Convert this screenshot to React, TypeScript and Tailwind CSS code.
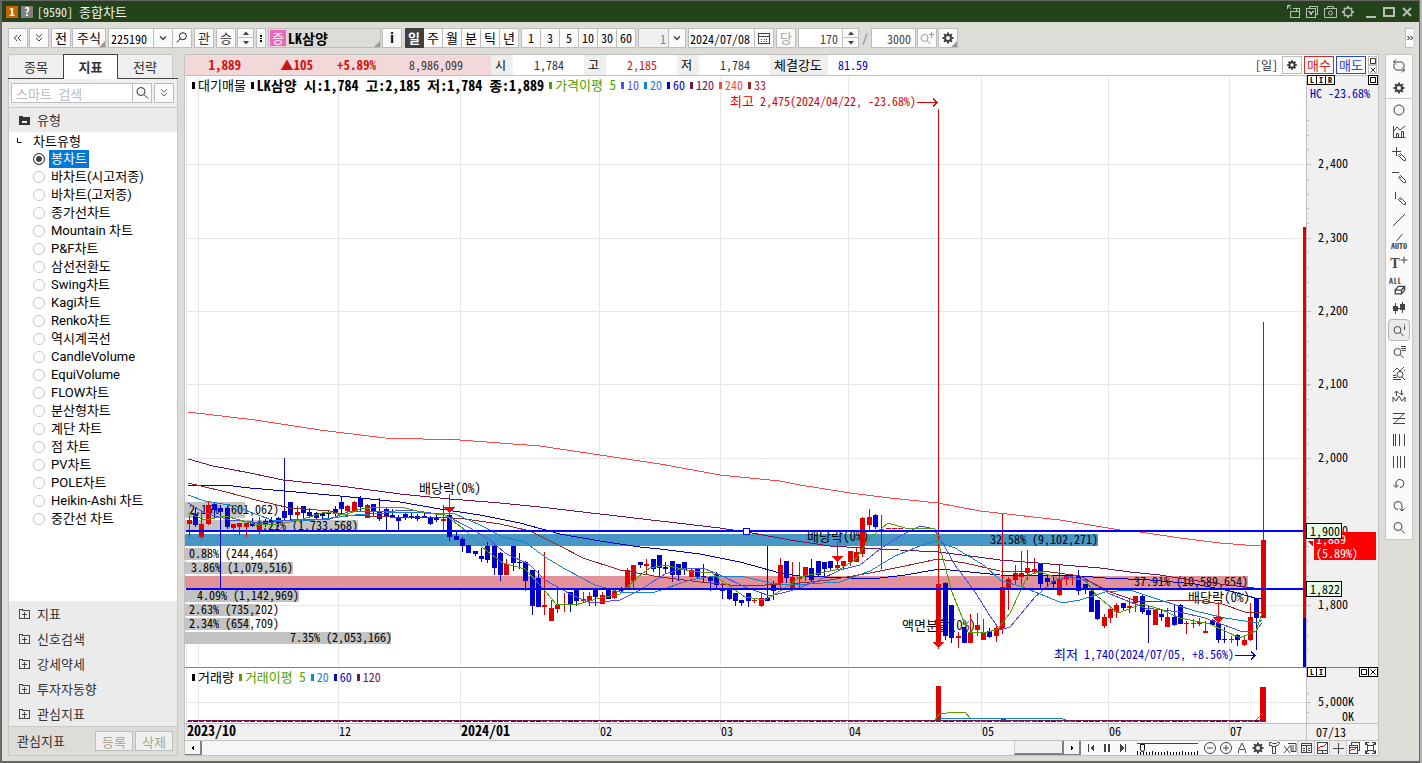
import React, { useState } from 'react';

const MONO =
  'font-["Noto_Sans_Mono_CJK_KR","Noto_Sans_CJK_KR",monospace]';

const RED = '#e00000';
const BLUE = '#0000c8';

// [high, bodyTop, bodyBottom, low, rising]
const CANDLES: number[][] = [
  [515, 520, 524, 537, 1], [508, 514, 525, 527, 0], [511, 524, 537, 539, 1],
  [502, 505, 524, 525, 1], [503, 504, 510, 518, 0], [505, 508, 512, 588, 0],
  [506, 508, 527, 529, 0], [524, 524, 528, 530, 1], [523, 523, 527, 535, 1],
  [523, 523, 527, 537, 1], [518, 523, 526, 527, 0], [517, 522, 530, 534, 1],
  [519, 521, 524, 527, 0], [517, 520, 523, 527, 0], [517, 518, 523, 527, 0],
  [458, 511, 518, 520, 0], [502, 502, 515, 520, 0], [506, 512, 515, 520, 1],
  [506, 506, 513, 518, 0], [508, 512, 516, 518, 0], [512, 513, 518, 520, 0],
  [513, 513, 516, 520, 0], [511, 513, 514, 518, 0], [506, 509, 513, 517, 0],
  [496, 502, 509, 514, 0], [505, 506, 511, 517, 1], [501, 502, 511, 512, 1],
  [496, 498, 507, 512, 0], [504, 505, 518, 518, 1], [504, 504, 512, 517, 0],
  [498, 512, 519, 521, 0], [508, 509, 516, 530, 0], [509, 515, 517, 518, 0],
  [515, 517, 521, 530, 0], [512, 514, 517, 520, 0], [512, 516, 517, 519, 0],
  [514, 516, 519, 521, 0], [513, 516, 517, 518, 0], [516, 517, 524, 525, 0],
  [514, 517, 520, 522, 0], [505, 519, 521, 530, 1], [514, 515, 537, 541, 0],
  [530, 536, 540, 540, 0], [537, 539, 546, 552, 0], [545, 545, 553, 553, 0],
  [551, 551, 554, 556, 0], [548, 556, 559, 562, 0], [542, 546, 560, 563, 0],
  [545, 546, 568, 575, 0], [552, 553, 575, 581, 0], [559, 564, 575, 575, 1],
  [546, 546, 563, 571, 0], [553, 562, 563, 569, 0], [561, 562, 581, 591, 0],
  [570, 570, 606, 615, 0], [570, 578, 607, 607, 0], [552, 605, 607, 615, 1],
  [600, 608, 621, 621, 1], [590, 605, 609, 613, 1], [593, 604, 605, 612, 1],
  [592, 592, 604, 612, 0], [589, 590, 601, 606, 0], [592, 599, 601, 602, 1],
  [592, 596, 601, 606, 1], [589, 590, 597, 606, 0], [592, 595, 604, 604, 1],
  [589, 589, 599, 599, 0], [590, 591, 598, 599, 1], [587, 588, 591, 592, 0],
  [568, 570, 588, 590, 1], [565, 565, 581, 588, 1], [562, 562, 565, 568, 0],
  [559, 564, 566, 574, 1], [559, 559, 569, 572, 0], [555, 555, 568, 577, 0],
  [562, 567, 569, 574, 0], [561, 561, 575, 582, 0], [564, 564, 575, 581, 0],
  [562, 562, 570, 575, 0], [568, 570, 577, 577, 1], [568, 569, 577, 579, 0],
  [564, 576, 577, 582, 0], [576, 577, 581, 591, 0], [572, 574, 585, 589, 0],
  [583, 589, 591, 599, 0], [589, 590, 599, 600, 0], [593, 593, 601, 606, 0],
  [600, 600, 603, 606, 0], [593, 593, 601, 607, 0], [598, 600, 601, 603, 1],
  [593, 598, 606, 607, 1], [546, 598, 601, 601, 0], [581, 585, 591, 600, 0],
  [558, 565, 583, 588, 1], [561, 561, 578, 583, 0], [562, 577, 588, 590, 1],
  [562, 577, 579, 588, 1], [567, 567, 576, 581, 1], [559, 568, 580, 581, 0],
  [561, 561, 575, 577, 0], [562, 562, 569, 576, 0], [561, 561, 568, 570, 0],
  [562, 565, 568, 569, 1], [561, 561, 566, 569, 1], [551, 551, 562, 566, 1],
  [548, 552, 562, 562, 1], [517, 518, 554, 557, 1], [509, 517, 525, 530, 1],
  [514, 515, 527, 529, 0], [515, 529, 530, 569, 1], [528, 528, 529, 529, 1],
  [528, 528, 529, 529, 1], [528, 528, 529, 529, 1], [528, 528, 529, 529, 1],
  [528, 528, 529, 529, 1], [528, 528, 529, 529, 1], [528, 528, 529, 529, 1],
  [528, 528, 529, 529, 1], [109, 584, 643, 649, 1], [582, 583, 636, 640, 0],
  [605, 605, 638, 643, 0], [632, 636, 638, 648, 1], [627, 627, 643, 643, 0],
  [614, 632, 643, 643, 1], [613, 625, 630, 636, 1], [619, 633, 640, 640, 1],
  [628, 631, 637, 638, 0], [626, 628, 636, 642, 1], [513, 587, 629, 634, 1],
  [577, 579, 588, 610, 1], [565, 573, 580, 585, 1], [551, 573, 577, 585, 1],
  [550, 568, 573, 580, 1], [558, 569, 572, 574, 1], [563, 564, 584, 588, 0],
  [576, 578, 582, 586, 0], [577, 581, 584, 588, 0], [565, 578, 595, 596, 1],
  [575, 576, 579, 585, 1], [575, 577, 578, 585, 1], [570, 576, 591, 595, 0],
  [584, 584, 589, 594, 0], [590, 591, 612, 612, 0], [600, 600, 619, 620, 0],
  [614, 617, 626, 628, 1], [608, 609, 618, 623, 1], [603, 605, 612, 618, 1],
  [603, 603, 608, 610, 0], [599, 606, 608, 613, 1], [596, 596, 603, 612, 1],
  [595, 596, 612, 614, 0], [605, 610, 615, 643, 0], [609, 610, 625, 625, 1],
  [610, 614, 617, 621, 0], [608, 617, 627, 627, 1], [605, 617, 625, 626, 0],
  [604, 605, 624, 624, 0], [621, 623, 624, 634, 1], [619, 623, 624, 628, 1],
  [618, 622, 624, 626, 1], [621, 631, 633, 633, 1], [619, 620, 625, 625, 0],
  [620, 623, 640, 643, 0], [627, 639, 640, 643, 0], [636, 639, 640, 643, 1],
  [634, 635, 640, 646, 0], [636, 640, 645, 646, 1], [603, 617, 640, 641, 1],
  [598, 598, 618, 650, 0], [322, 540, 618, 618, 1],
];

const barX = (i: number) => Math.floor(189.1 + i * 6.355);

const AVERAGES = [
  {
    key: '240',
    color: '#ff4646',
    points:
      '188,412 255,420 320,430 385,438 460,440 540,446 600,455 660,464 720,475 780,481 800,485 850,493 890,498 938,503 980,511 1060,520 1120,530 1140,532 1180,538 1220,543 1245,545 1262,546',
  },
  {
    key: '120',
    color: '#781450',
    points:
      '188,459 213,466 250,473 283,480 340,486 400,494 450,499 500,503 540,507 600,514 660,521 720,528 752,533 790,540 830,546 880,549 938,552 970,556 1000,560 1050,564 1100,568 1130,572 1160,575 1190,580 1220,584 1262,589',
  },
  {
    key: '60',
    color: '#0000c8',
    points:
      '188,485 224,485 250,488 285,491 340,496 400,502 440,509 480,515 520,523 560,534 600,541 640,547 660,549 700,554 740,562 780,573 800,576 850,578 880,578 905,575 940,569 960,571 1000,575 1080,576 1105,578 1150,580 1195,584 1230,591 1255,598 1262,598',
  },
  {
    key: '33',
    color: '#962828',
    points:
      '188,483 222,491 260,501 290,508 330,511 345,515 390,517 440,517 465,519 500,524 530,531 560,546 583,558 620,570 660,577 700,582 740,586 790,584 830,580 870,573 900,567 938,559 965,563 1000,571 1050,572 1080,576 1110,592 1140,602 1195,600 1222,604 1245,612 1262,613',
  },
  {
    key: '20',
    color: '#1482d2',
    points:
      '188,495 205,501 235,506 255,514 275,521 315,520 355,515 400,512 455,514 480,525 503,537 525,542 545,557 565,569 595,585 620,592 655,592 690,580 715,576 745,577 770,583 790,585 840,582 870,571 895,556 920,546 936,541 955,548 985,566 1000,580 1025,588 1050,598 1062,603 1080,600 1105,592 1130,590 1160,600 1195,611 1225,618 1258,623 1262,620',
  },
  {
    key: '10',
    color: '#5050f0',
    points:
      '188,503 205,513 230,520 265,523 300,519 330,519 350,511 380,512 410,510 445,515 470,528 490,540 505,553 530,565 545,580 570,594 590,603 620,600 640,590 665,574 685,568 705,569 720,575 745,587 770,596 790,591 815,582 840,570 860,565 880,549 900,536 920,526 935,529 955,565 975,592 990,616 1000,630 1010,627 1035,597 1055,580 1070,576 1090,582 1110,594 1145,608 1180,612 1205,618 1240,631 1256,631 1262,623',
  },
  {
    key: '5',
    color: '#50a000',
    points:
      '188,513 205,520 225,516 240,520 258,525 280,524 300,520 325,512 345,515 360,509 380,507 405,508 425,513 445,515 465,530 483,548 503,563 525,569 540,585 556,604 575,605 600,598 620,594 638,577 650,568 665,565 690,571 712,573 725,583 745,597 765,600 785,588 800,577 825,572 840,569 855,560 870,538 888,523 905,528 935,529 940,548 952,592 968,632 985,633 998,629 1010,613 1028,575 1040,572 1060,579 1085,580 1097,596 1118,613 1142,604 1160,609 1180,618 1210,624 1240,638 1256,631 1262,613',
  },
];

const PROFILE = [
  { y: 502, h: 16, end: 245, x: 189, fill: '#c3c3c3', text: '2.15% (601,062)' },
  { y: 520, h: 12, end: 358, x: 256, fill: '#c3c3c3', text: '6.21% (1,733,568)' },
  { y: 534, h: 12, end: 1098, x: 990, fill: '#4696c6', text: '32.58% (9,102,271)' },
  { y: 548, h: 12, end: 209, x: 189, fill: '#c3c3c3', text: '0.88% (244,464)' },
  { y: 562, h: 12, end: 293, x: 191, fill: '#c3c3c3', text: '3.86% (1,079,516)' },
  { y: 576, h: 12, end: 1248, x: 1134, fill: '#e4929a', text: '37.91% (10,589,654)' },
  { y: 590, h: 12, end: 299, x: 197, fill: '#c3c3c3', text: '4.09% (1,142,969)' },
  { y: 604, h: 12, end: 259, x: 189, fill: '#c3c3c3', text: '2.63% (735,202)' },
  { y: 618, h: 12, end: 250, x: 189, fill: '#c3c3c3', text: '2.34% (654,709)' },
  { y: 632, h: 12, end: 391, x: 290, fill: '#c3c3c3', text: '7.35% (2,053,166)' },
];

const EVENTS = [
  { x: 419, y: 493, text: '배당락(0%)', ax: 449, from: 494, to: 512 },
  { x: 807, y: 541, text: '배당락(0%)', ax: 837, from: 542, to: 561 },
  { x: 902, y: 630, text: '액면분할(0%)', ax: 938, from: 630, to: 647 },
  { x: 1188, y: 602, text: '배당락(0%)', ax: 1218, from: 602, to: 622 },
];

const MONTHS = [
  { x: 186, text: '2023/10', bold: true },
  { x: 338, text: '12' },
  { x: 460, text: '2024/01', bold: true },
  { x: 599, text: '02' },
  { x: 720, text: '03' },
  { x: 848, text: '04' },
  { x: 981, text: '05' },
  { x: 1108, text: '06' },
  { x: 1229, text: '07' },
];

const PRICES = [
  { y: 164, text: '2,400' },
  { y: 238, text: '2,300' },
  { y: 311, text: '2,200' },
  { y: 384, text: '2,100' },
  { y: 458, text: '2,000' },
  { y: 531, text: '1,900' },
  { y: 605, text: '1,800' },
];

const MINOR_TICKS = Array.from({ length: 37 }, (_, i) =>
  Math.round(120 + i * 14.7)
);

const PRICE_LEGEND = [
  { text: '대기매물', color: 'text-black text-[13px]' },
  {
    text: 'LK삼양 시:1,784 고:2,185 저:1,784 종:1,889',
    color: 'text-black text-sm font-bold',
  },
  { text: '가격이평 5', color: 'text-[#50a000] text-[13px]' },
  { text: '10', color: 'text-[#5050f0]' },
  { text: '20', color: 'text-[#1482d2]' },
  { text: '60', color: 'text-[#0000c8]' },
  { text: '120', color: 'text-[#781450]' },
  { text: '240', color: 'text-[#ff4646]' },
  { text: '33', color: 'text-[#962828]' },
];

const VOLUME_LEGEND = [
  { text: '거래량', color: 'text-black text-[13px]' },
  { text: '거래이평 5', color: 'text-[#50a000] text-[13px]' },
  { text: '20', color: 'text-[#1482d2]' },
  { text: '60', color: 'text-[#0000c8]' },
  { text: '120', color: 'text-[#781450]' },
];

const CHART_TYPES = [
  '봉차트', '바차트(시고저종)', '바차트(고저종)', '종가선차트', 'Mountain 차트',
  'P&F차트', '삼선전환도', 'Swing차트', 'Kagi차트', 'Renko차트', '역시계곡선',
  'CandleVolume', 'EquiVolume', 'FLOW차트', '분산형차트', '계단 차트', '점 차트',
  'PV차트', 'POLE차트', 'Heikin-Ashi 차트', '중간선 차트',
];

const GROUPS = ['지표', '신호검색', '강세약세', '투자자동향', '관심지표'];

type IconProps = {
  d?: string;
  fill?: string;
  size?: string;
  width?: number;
  crisp?: boolean;
  children?: React.ReactNode;
};

const Icon = ({ d, fill, size = 'size-4', width = 1, crisp, children }: IconProps) => (
  <svg
    viewBox="0 0 16 16"
    className={`${size} shrink-0`}
    fill="none"
    stroke="currentColor"
    strokeWidth={width}
    shapeRendering={crisp ? 'crispEdges' : 'auto'}
    aria-hidden="true"
  >
    {d && <path d={d} />}
    {fill && <path d={fill} fill="currentColor" stroke="none" />}
    {children}
  </svg>
);

const Gear = ({ size }: { size?: string }) => (
  <Icon size={size}>
    <circle cx="8" cy="8" r="3" strokeWidth="2" />
    <path
      d="M8 2.5v2M8 11.5v2M2.5 8h2M11.5 8h2M4.1 4.1l1.4 1.4M10.5 10.5l1.4 1.4M4.1 11.9l1.4-1.4M10.5 5.5l1.4-1.4"
      strokeWidth="2"
    />
  </Icon>
);

const Magnifier = () => <Icon d="M11 6.5a4 4 0 1 1-8 0a4 4 0 0 1 8 0zM10 9.5l4 4" />;

const PENCIL = 'M7.500 9.500l2-2 5 5v2h-2zM8.500 10.500l2-2';

const SIDE_TOOLS: { name: string; icon: React.ReactNode; active?: boolean }[] = [
  { name: '새로고침', icon: <Icon d="M5 1.5L2.5 4L5 6.5M2.5 4H11l2 2v4M11 14.5l2.5-2.500L11 9.500M13.500 12H5l-2-2V6" /> },
  { name: '설정', icon: <Gear /> },
  { name: '원', icon: <Icon d="M13 8a5 5 0 1 1-10 0a5 5 0 0 1 10 0z" /> },
  { name: '지표 추가', icon: <Icon d="M2.5 2v11.5h12M5.5 13V9.5h2V13M10.5 13V7.5h2V13M3 7l3-4 3 3 5-4" /> },
  { name: '십자선', icon: <Icon d={`M1 5.5h9M5.5 1v9${PENCIL}`} /> },
  { name: '수평선', icon: <Icon d={`M1 4.5h7${PENCIL}`} /> },
  { name: '수직선', icon: <Icon d={`M4.5 2v7${PENCIL}`} /> },
  { name: '추세선', icon: <Icon d="M2 14L14 2" /> },
  { name: '자동추세선', icon: null },
  { name: '문자', icon: null },
  { name: '모두 지우기', icon: null },
  { name: '봉', icon: <Icon d="M4.5 3v11M11.5 2v11" fill="M2 6h5v5H2zM9 4h5v6H9zM6 8h4v1H6z" /> },
  { name: '정보', active: true, icon: <Icon d="M10 8a3.5 3.5 0 1 1-7 0a3.5 3.5 0 0 1 7 0zM9 10.5l3.5 3.5M13.5 4v4M13.5 2v1" /> },
  { name: '목록', icon: <Icon d="M10 8a3.5 3.5 0 1 1-7 0a3.5 3.5 0 0 1 7 0zM9 10.5l3.5 3.5M10 2.5h5M10 4.5h5M11 6.5h4" /> },
  { name: '패턴 검색', icon: <Icon d="M2 6l4-4 3 3 4-4M12 8.5a3 3 0 1 1-6 0a3 3 0 0 1 6 0zM11 11l3 3M2 9.5h3M2 11.5h4M2 13.5h8M13 5l1-1" /> },
  { name: '신호', icon: <Icon d="M2 14V9l3 4 3-5 3 5 3-4v5M5.5 8V3M3.5 5l2-2 2 2M10.5 2v5M8.5 5l2 2 2-2" /> },
  { name: '지그재그', icon: <Icon d="M2 3.5h12M2 8.5h12M2 13.5h12M13 3.5L3 13.5" /> },
  { name: '피보나치', icon: <Icon crisp d="M2.5 2v12M4.5 2v12M8.5 2v12M13.5 2v12" /> },
  { name: '주기선', icon: <Icon crisp d="M2.5 2v12M6.5 2v12M9.5 2v12M13.5 2v12" /> },
  { name: '실행취소', icon: <Icon d="M5 11V7a4 4 0 1 1 4 4.5M2.5 9L5 11.500L7.500 9" /> },
  { name: '다시실행', icon: <Icon d="M11 13V7.500a4 4 0 1 0-4 4M8.500 10.500L11 13l2.500-2.500" /> },
  { name: '확대', icon: <Magnifier /> },
];

const ToolButton = ({
  label,
  className = 'w-5',
  children,
}: {
  label: string;
  className?: string;
  children?: React.ReactNode;
}) => (
  <button
    type="button"
    aria-label={label}
    className={`relative flex h-5 shrink-0 items-center justify-center border border-[#bdbdbd] bg-[#fafafa] text-[13px] ${className}`}
  >
    {children ?? label}
  </button>
);

const Corner = () => (
  <span className="absolute right-0 bottom-0 border-[3px] border-transparent border-r-[#999] border-b-[#999]" />
);

const Spinner = ({ label }: { label: string }) => (
  <span className="flex h-5 w-[17px] shrink-0 flex-col border border-[#bdbdbd] bg-[#fafafa] text-[#444]">
    <button type="button" aria-label={`${label} 증가`} className="flex h-[9px] items-center justify-center border-b border-[#bdbdbd]">
      <Icon size="size-2" fill="M2 12h12L8 5z" />
    </button>
    <button type="button" aria-label={`${label} 감소`} className="flex h-[9px] items-center justify-center">
      <Icon size="size-2" fill="M2 4h12L8 11z" />
    </button>
  </span>
);

const Chevron = () => (
  <span className="text-[#444]">
    <Icon size="size-3" d="M4 6l4 4 4-4" width={2} />
  </span>
);

const Titlebar = () => (
  <header className="flex h-[21px] shrink-0 items-center bg-[#24431b] pr-1 pl-1 text-[#b9bfb5]">
    <span className="flex size-3 items-center justify-center bg-[#c86400] text-[11px] font-bold text-white">1</span>
    <span className="ml-[3px] flex size-3 items-center justify-center bg-[#808080] text-[11px] font-bold text-white">?</span>
    <h1 className="ml-1 text-xs text-[#f0f0f0]">
      [9590] <span className="text-[13px]">종합차트</span>
    </h1>
    <div className="ml-auto flex items-center gap-0.5">
      <button type="button" aria-label="분리"><Icon crisp d="M4.5 8v5.5h9v-9H7M4 7.500h10M10.500 4.500v3M1.500 1.500l4 4M1 1.500h4M1.500 1v4" /></button>
      <button type="button" aria-label="화면 복사"><Icon crisp d="M2.5 4.5h9v9h-9zM5.5 4V2.5h8v8H12M4.5 7.500l2.500 3 2.500-3M5 7.500l2 1 2-1" /></button>
      <button type="button" aria-label="캡처"><Icon d="M2.5 4.5h12v9h-12zM5.5 4.5v-2h6v2M10.5 9a2 2 0 1 1-4 0a2 2 0 0 1 4 0z" /></button>
      <button type="button" aria-label="환경설정" className="mr-[5px]">
        <Icon>
          <circle cx="8" cy="8" r="4" strokeWidth="1.5" />
          <path d="M8 2v2M8 12v2M2 8h2M12 8h2M4 4l1 1M11 11l1 1M4 12l1-1M11 5l1-1" strokeWidth="2" />
        </Icon>
      </button>
      <button type="button" aria-label="최소화"><Icon crisp fill="M3 12h10v2H3z" /></button>
      <button type="button" aria-label="최대화"><Icon crisp d="M3 4h10v8H3z" width={2} /></button>
      <button type="button" aria-label="닫기"><Icon d="M4 4l8 8M12 4l-8 8" width={2} /></button>
    </div>
  </header>
);

const Toolbar = () => {
  const [period, setPeriod] = useState('일');
  const periods = ['일', '주', '월', '분', '틱', '년'];
  const minutes = ['1', '3', '5', '10', '30', '60'];

  return (
    <div className="flex h-8 shrink-0 items-center pl-1.5 text-xs">
      <ToolButton label="접기"><Icon size="size-3" d="M7 4L3 8l4 4M12 4L8 8l4 4" /></ToolButton>
      <ToolButton label="펼치기" className="ml-px w-5"><Icon size="size-3" d="M4 3l4 4 4-4M4 8l4 4 4-4" /></ToolButton>
      <ToolButton label="전" className="ml-0.5 w-5" />
      <ToolButton label="주식" className="ml-px w-[34px]">주식<Corner /></ToolButton>
      <input
        aria-label="종목코드"
        defaultValue="225190"
        className="ml-0.5 h-5 w-[46px] border border-[#bdbdbd] bg-white pl-0.5"
      />
      <ToolButton label="종목 목록" className="-ml-px w-5"><Chevron /></ToolButton>
      <ToolButton label="종목 찾기" className="-ml-px w-5">
        <Icon size="size-3.5" d="M13 6a4 4 0 1 1-8 0a4 4 0 0 1 8 0zM6 9l-4 4" />
      </ToolButton>
      <ToolButton label="관" className="ml-0.5 w-5 text-[#333]" />
      <ToolButton label="승" className="ml-0.5 w-5 text-[#333]" />
      <span className="ml-px"><Spinner label="종목" /></span>
      <ToolButton label="더보기" className="ml-0.5 w-2.5">
        <Icon size="h-4 w-2" crisp d="M8 2v3M8 7v3M8 12v3" width={3} />
      </ToolButton>
      <div className="relative ml-0.5 flex h-5 w-[113px] shrink-0 items-center border border-[#bdbdbd] pl-px">
        <span className="flex size-4 items-center justify-center bg-[#f064be] text-[13px] text-white">증</span>
        <span className="ml-0.5 text-sm font-bold">LK삼양</span>
        <Corner />
      </div>
      <ToolButton label="정보" className="ml-px w-5"><b>i</b></ToolButton>
      <div className="ml-[3px] flex text-[13px]">
        {periods.map((p) => (
          <button
            key={p}
            type="button"
            onClick={() => setPeriod(p)}
            className={`h-5 w-[19px] border-y border-r ${p === period
                ? 'border-[#404040] bg-[#404040] font-bold text-white'
                : 'border-[#bdbdbd] bg-[#fafafa]'
              }`}
          >
            {p}
          </button>
        ))}
      </div>
      <div className="ml-0.5 flex border-l border-[#bdbdbd]">
        {minutes.map((m) => (
          <button key={m} type="button" className="h-5 w-[19px] border-y border-r border-[#bdbdbd] bg-[#fafafa]">
            {m}
          </button>
        ))}
      </div>
      <input
        aria-label="분 단위"
        defaultValue="1"
        className="ml-0.5 h-5 w-[31px] border border-[#bdbdbd] bg-[#f0f0f0] pr-0.5 text-right text-[#808080]"
      />
      <ToolButton label="분 목록" className="-ml-px w-[18px]"><Chevron /></ToolButton>
      <input
        aria-label="기준일"
        defaultValue="2024/07/08"
        className="ml-0.5 h-5 w-[67px] border border-[#bdbdbd] bg-white pl-px"
      />
      <ToolButton label="달력" className="-ml-px w-5 text-[#444]">
        <Icon crisp d="M2.5 3.5h11v10h-11zM2 6.5h12M5 9.5h1M7.500 9.5h1M10 9.5h1M5 11.5h1M7.500 11.5h1M10 11.5h1" />
      </ToolButton>
      <ToolButton label="당" className="ml-0.5 w-5 text-[#a9a593]" />
      <input
        aria-label="표시 봉수"
        defaultValue="170"
        className="ml-0.5 h-5 w-[45px] border border-[#bdbdbd] bg-white pr-1 text-right text-[#444]"
      />
      <span className="-ml-px"><Spinner label="표시 봉수" /></span>
      <span className="w-3 text-center text-[#777]">/</span>
      <input
        aria-label="전체 봉수"
        defaultValue="3000"
        className="h-5 w-[45px] border border-[#bdbdbd] bg-white pr-1 text-right text-[#444]"
      />
      <ToolButton label="더 조회" className="ml-px w-5 text-[#999]">
        <Icon d="M9 8a3.5 3.5 0 1 1-7 0a3.5 3.5 0 0 1 7 0zM8 10.5l3.5 3.5M12.5 2v6M10 4.5h5" />
      </ToolButton>
      <ToolButton label="차트 설정" className="ml-px w-5 text-[#444]"><Gear /><Corner /></ToolButton>
      <button type="button" aria-label="더 보기" className="mr-1.5 ml-auto flex h-5 w-2 items-center justify-center border border-r-0 border-[#bdbdbd] bg-[#fafafa]">
        <Icon size="size-2" d="M3 4l4 4-4 4M9 4l4 4-4 4" width={2} />
      </button>
    </div>
  );
};

const Sidebar = () => {
  const [type, setType] = useState('봉차트');

  return (
    <aside className="flex w-[170px] shrink-0 flex-col border border-[#c8c8c8] bg-white text-[13px] text-[#333]">
      <div className="-mx-px -mt-px flex h-[25px] shrink-0 border-b border-[#444] bg-[#dddcd6]">
        <button type="button" className="w-[55px] border-t border-l border-[#c8c8c8] bg-[#efefef]">종목</button>
        <button type="button" className="-mb-px w-[55px] border border-b-0 border-[#444] bg-white font-bold">지표</button>
        <button type="button" className="w-[55px] border-t border-r border-[#c8c8c8] bg-[#efefef]">전략</button>
      </div>
      <div className="flex h-7 shrink-0 items-center bg-[#efefef] px-0.5">
        <input
          aria-label="검색"
          placeholder="스마트 검색"
          className="h-5 w-[122px] border border-[#bdbdbd] bg-white pl-1 placeholder:text-[#bbb]"
        />
        <ToolButton label="검색 실행" className="-ml-px w-5"><Magnifier /></ToolButton>
        <ToolButton label="검색 옵션" className="ml-0.5 w-5"><Icon size="size-3" d="M4 3l4 4 4-4M4 8l4 4 4-4" /></ToolButton>
      </div>
      <button type="button" className="flex h-[25px] shrink-0 items-center border-t border-[#c8c8c8] bg-[#ebebeb] pl-2">
        <Icon size="size-3.5" crisp fill="M2 3h5v2h8v9H2zM6 9v2h5V9z" />
        <span className="ml-1.5">유형</span>
      </button>
      <div className="min-h-0 flex-1 overflow-hidden text-black">
        <div className="flex h-[18px] items-center pl-2">
          <Icon size="size-2" d="M1 2v9h8" width={2} />
          <span className="ml-2">차트유형</span>
        </div>
        {CHART_TYPES.map((name) => (
          <label key={name} className={'flex h-[18px] items-center pl-6 font-[Roboto,"Noto_Sans_CJK_KR",sans-serif]'}>
            <input
              type="radio"
              name="chartType"
              checked={type === name}
              onChange={() => setType(name)}
              className="size-3 shrink-0 appearance-none rounded-full border border-[#c4c4c4] bg-white checked:border-[#444] checked:bg-[#444] checked:shadow-[inset_0_0_0_2px_white]"
            />
            <span className={`ml-1 h-[18px] px-0.5 leading-[18px] ${type === name ? 'bg-[#0078d7] text-white' : ''}`}>
              {name}
            </span>
          </label>
        ))}
      </div>
      <div className="shrink-0 bg-[#ebebeb]">
        {GROUPS.map((name) => (
          <button key={name} type="button" className="flex h-[25px] w-full items-center pl-2">
            <Icon size="size-3.5" crisp d="M2.5 2.5h4v2h8v9h-12zM8.5 6v6M5.500 9h6" />
            <span className="ml-1.5">{name}</span>
          </button>
        ))}
      </div>
      <div className="flex h-[29px] shrink-0 items-center border-t border-[#c8c8c8] bg-[#dddcd6] pr-1 pl-2 text-[#333]">
        관심지표
        <button type="button" className="ml-auto h-5 w-[38px] border border-[#bdbdbd] bg-[#efefef] text-[#a9a593]">등록</button>
        <button type="button" className="ml-0.5 h-5 w-[38px] border border-[#bdbdbd] bg-[#efefef] text-[#a9a593]">삭제</button>
      </div>
    </aside>
  );
};

const QuoteBar = () => (
  <div className="flex h-[21px] shrink-0 items-stretch border-b border-[#c0c0c0] bg-white text-xs leading-5">
    <div className="flex w-[306px] shrink-0 bg-[#f2d8d8] text-[13px] font-bold text-[#d21414]">
      <span className="w-14 text-right">1,889</span>
      <span className="w-[72px] text-right">▲105</span>
      <span className="w-[63px] text-right">+5.89%</span>
      <span className="w-[87px] text-right text-xs leading-5 font-normal text-[#333]">8,986,099</span>
    </div>
    <span className="w-[22px] bg-[#efefef] pl-1">시</span>
    <span className="w-[71px] pr-5 text-right text-[#333]">1,784</span>
    <span className="w-[22px] bg-[#efefef] pl-1">고</span>
    <span className="w-[71px] pr-5 text-right text-[#d21414]">2,185</span>
    <span className="w-[22px] bg-[#efefef] pl-1">저</span>
    <span className="w-[71px] pr-5 text-right text-[#333]">1,784</span>
    <span className="w-[58px] bg-[#efefef] pl-1 text-[13px] leading-5">체결강도</span>
    <span className="pl-2.5 text-[#0000c8]">81.59</span>
    <div className="ml-auto flex items-center gap-0.5 pr-px text-[13px] text-[#333]">
      <span className="mr-0.5 text-xs">[일]</span>
      <ToolButton label="설정" className="h-[18px] w-5"><Gear size="size-3.5" /></ToolButton>
      <button type="button" className="h-[18px] w-[30px] border border-[#d22828] bg-[#fafafa] leading-4 text-[#d22828]">매수</button>
      <button type="button" className="h-[18px] w-[30px] border border-[#2846d2] bg-[#fafafa] leading-4 text-[#2846d2]">매도</button>
      <span className="flex flex-col">
        <button type="button" aria-label="창 크기" className="flex size-[9px] items-center justify-center border border-[#bdbdbd]">
          <Icon size="size-2" d="M3 3h10v10H3z" width={2} />
        </button>
        <button type="button" aria-label="창 닫기" className="flex size-[9px] items-center justify-center border border-[#bdbdbd]">
          <Icon size="size-2" d="M3 3l10 10M13 3L3 13" width={2} />
        </button>
      </span>
    </div>
  </div>
);

const Legend = ({ items, className }: { items: typeof PRICE_LEGEND; className: string }) => (
  <div className={`absolute left-[7px] flex h-4 items-center gap-[5px] text-xs whitespace-pre ${className}`}>
    {items.map((item) => (
      <span key={item.text} className={`flex h-4 items-center leading-4 ${item.color}`}>
        <span className="mr-[3px] h-[7px] w-[3px] bg-current" />
        {item.text}
      </span>
    ))}
  </div>
);

const PaneButtons = ({ keys, className }: { keys: string[]; className: string }) => (
  <div className={`absolute flex border-l border-black ${className}`}>
    {keys.map((k) => (
      <button key={k} type="button" aria-label={k} className="flex h-[10px] w-[9px] items-center justify-center border-y border-r border-black bg-white text-[8px] leading-none font-bold">
        {k === 'max' && <Icon size="size-2" d="M3 3h10v10H3z" width={2} />}
        {k === 'close' && <Icon size="size-2" d="M3 3l10 10M13 3L3 13" width={2} />}
        {k.length === 1 && k}
      </button>
    ))}
  </div>
);

const Chart = () => (
  <div className="relative min-h-0 flex-1 bg-white">
    <svg
      viewBox="185 76 1193 665"
      preserveAspectRatio="xMinYMin meet"
      className="absolute inset-0 h-full w-full text-xs"
      shapeRendering="crispEdges"
      role="img"
      aria-label="LK삼양 일봉 차트"
    >
      {/* grid */}
      <g fill="#e6e6e6">
        {PRICES.map((p) => (
          <rect key={p.text} x="186" y={p.y} width="1117" height="1" />
        ))}
        <rect x="186" y="702" width="1120" height="1" />
        {MONTHS.map((m) => (
          <g key={m.x}>
            <rect x={m.x} y="77" width="1" height="588" />
            <rect x={m.x} y="669" width="1" height="54" />
          </g>
        ))}
        <rect x="198" y="77" width="1" height="588" />
        <rect x="198" y="669" width="1" height="54" />
      </g>

      {/* volume profile */}
      {PROFILE.map((b) => (
        <rect key={b.y} x="185" y={b.y} width={b.end - 185} height={b.h} fill={b.fill} />
      ))}
      {PROFILE.map((b) => (
        <text key={b.y} x={b.x} y={b.y === 502 ? 514 : b.y + 10}>
          {b.text}
        </text>
      ))}
      {EVENTS.map((e) => (
        <text key={e.x} x={e.x} y={e.y} className="text-[13px]">{e.text}</text>
      ))}

      {/* candles */}
      {CANDLES.map(([high, top, bottom, low, up], i) => (
        <g key={i} fill={up ? RED : BLUE}>
          <rect x={barX(i)} y={high} width="1" height={Math.max(low - high, 1)} />
          <rect x={barX(i) - 2} y={top} width="5" height={Math.max(bottom - top, 1)} />
          <rect x={barX(i) - 2} y="721" width="5" height="1" />
        </g>
      ))}

      {AVERAGES.map((a) => (
        <polyline key={a.key} points={a.points} fill="none" stroke={a.color} />
      ))}

      {EVENTS.map((e) => (
        <g key={e.x} fill="#ff0000">
          <rect x={e.ax} y={e.from} width="1" height={e.to - e.from} />
          <path d={`M${e.ax - 5} ${e.to - 5}h11l-5.5 6z`} />
        </g>
      ))}

      {/* support lines */}
      <rect x="186" y="530" width="1120" height="2" fill="#0000ff" />
      <rect x="186" y="588" width="1120" height="2" fill="#0000ff" />
      <rect x="743.5" y="528.5" width="6" height="6" fill="#fff" stroke="#0000ff" />

      <text x="730" y="106" fill={RED}>
        <tspan className="text-[13px]">최고</tspan> 2,475(2024/04/22, -23.68%)
      </text>
      <path d="M917 102.5h20M933 98.5l4 4-4 4" fill="none" stroke={RED} />
      <text x="1054" y="659" fill={BLUE}>
        <tspan className="text-[13px]">최저</tspan> 1,740(2024/07/05, +8.56%)
      </text>
      <path d="M1235 655.5h20M1251 651.5l4 4-4 4" fill="none" stroke={BLUE} />

      {/* volume */}
      <rect x="936" y="686" width="5" height="36" fill={RED} />
      <rect x="1260" y="687" width="6" height="35" fill={RED} />
      <rect x="1001" y="719" width="5" height="3" fill={RED} />
      <polyline points="911,720 935,720 939,714 955,712 965,712 971,719" fill="none" stroke="#50a000" />
      <polyline points="1256,720 1262,714" fill="none" stroke="#50a000" />
      <polyline points="940,718 1060,718 1066,720" fill="none" stroke="#1482d2" />
      <rect x="188" y="720" width="1075" height="1" fill="#781450" />

      {/* day range gauge */}
      <rect x="1303" y="227" width="3" height="391" fill={RED} />
      <rect x="1303" y="618" width="3" height="49" fill={BLUE} />

      {/* axes */}
      <rect x="1306" y="76" width="72" height="665" fill="#f0f0f0" />
      <rect x="185" y="723" width="1121" height="18" fill="#f0f0f0" />
      <g fill="#c0c0c0">
        <rect x="1306" y="76" width="1" height="665" />
        <rect x="185" y="723" width="1193" height="1" />
        <rect x="185" y="740" width="1193" height="1" />
        {MINOR_TICKS.map((y) => (
          <rect key={y} x="1306" y={y} width="3" height="1" />
        ))}
        {PRICES.map((p) => (
          <rect key={p.y} x="1306" y={p.y} width="5" height="1" />
        ))}
        <rect x="1306" y="693" width="3" height="1" />
        <rect x="1306" y="702" width="5" height="1" />
        <rect x="1306" y="712" width="3" height="1" />
        {MONTHS.map((m) => (
          <rect key={m.x} x={m.x} y="724" width="1" height="6" />
        ))}
      </g>
      <rect x="185" y="667" width="1193" height="1" fill="#808080" />
      {MONTHS.map((m) => (
        <text key={m.x} x={m.x + 1} y="736" className={m.bold ? 'text-sm font-bold' : ''}>{m.text}</text>
      ))}
      {PRICES.map((p) => (
        <text key={p.y} x="1318" y={p.y + 4}>{p.text}</text>
      ))}
      <text x="1310" y="98" fill={BLUE}>HC -23.68%</text>
      <text x="1354" y="706" textAnchor="end">5,000K</text>
      <text x="1354" y="721" textAnchor="end">0K</text>
      <text x="1316" y="737">07/13</text>

      <rect x="1314" y="532" width="62" height="28" fill="#ff0000" />
      <path d="M1307 541l6 6v-6z" fill="#ff0000" />
      <text x="1316" y="544" fill="#fff">1,889</text>
      <text x="1316" y="558" fill="#fff">(5.89%)</text>
      <rect x="1306.5" y="523.5" width="35" height="15" fill="#e6ffe6" stroke="#000" />
      <text x="1310" y="536">1,900</text>
      <rect x="1306.5" y="581.5" width="35" height="15" fill="#e6ffe6" stroke="#000" />
      <text x="1310" y="594">1,822</text>
    </svg>
    <Legend items={PRICE_LEGEND} className="top-px" />
    <Legend items={VOLUME_LEGEND} className="top-[593px]" />
    <PaneButtons keys={['L', 'I', 'R']} className="top-[-1px] right-[43px]" />
    <PaneButtons keys={['max']} className="top-[-1px] right-0" />
    <PaneButtons keys={['L', 'I']} className="top-[591px] right-[52px]" />
    <PaneButtons keys={['max', 'close']} className="top-[591px] right-0" />
  </div>
);

const BOTTOM_TOOLS = [
  { name: '축소', icon: <Icon d="M13.5 8a5.5 5.5 0 1 1-11 0a5.5 5.5 0 0 1 11 0zM5 8h6" /> },
  { name: '확대', icon: <Icon d="M13.5 8a5.5 5.5 0 1 1-11 0a5.5 5.5 0 0 1 11 0zM5 8h6M8 5v6" /> },
  { name: '글자', icon: <Icon d="M4.5 13V10.500L8 3l3.500 7.500V13M5.500 9.500h5" /> },
  { name: '설정', icon: <Gear /> },
  { name: '도구', icon: <Icon d="M3.5 2.5v3h2.500v1h4v-1h1.500l2-2V2.500h-2l-1 1h-4l-1-1zM6.500 6.5v7h3v-7" /> },
  { name: '엑셀', icon: <Icon d="M6 3.5h8v8H9M8 6h4M8 8h4M8 10h4M2 6l6 7M8 6l-6 7" /> },
  { name: '표', boxed: true, icon: <Icon crisp d="M3.5 3.5h10v9h-10zM3 5.5h11M8.5 5v8M5 8.5h2M5 10.5h2M10 8.5h2M10 10.5h2" /> },
  { name: '차트', icon: <Icon crisp d="M3.5 2.5h10v11h-10zM3 10.5h11M8.5 10v3"><path d="M4 9l3-3 2 1 4-4" stroke="#d21414" /></Icon> },
  { name: '십자', boxed: true, icon: <Icon crisp d="M8.5 3v11M3 8.5h11" /> },
  { name: '창', icon: <Icon crisp d="M5.5 5V2.5h8v8h-2M3.5 5.5h8v8h-8zM3 7.500h9"><path d="M4 11l2-2 2 1 2-2" stroke="#d21414" /></Icon> },
  { name: '전체화면', icon: <Icon crisp d="M3.500 5V2.5h3M10 2.5h3.500V5M13.500 10v3.5H10M6.500 13.5h-3V10M5.500 5.5h6v5h-6zM3.500 3l2 2M13.500 3l-2 2M3.500 13l2-2M13.500 13l-2-2" /> },
];

const ScrollArrow = ({ label, d }: { label: string; d: string }) => (
  <button
    type="button"
    aria-label={label}
    className="flex h-full w-[17px] shrink-0 items-center justify-center border-r-2 border-b border-[#808080] bg-[#f4f4f4] text-black"
  >
    <Icon size="size-2.5" crisp fill={d} />
  </button>
);

const BottomBar = () => (
  <div className="flex h-3.5 shrink-0 items-center bg-[#fafafa] text-[#444]">
    <ScrollArrow label="왼쪽으로" d="M5 8l5-5v10z" />
    <div className="h-full flex-1 bg-[repeating-conic-gradient(#ececec_0_25%,#fff_0_50%)] bg-[length:2px_2px]" />
    <div className="h-full w-[50px] shrink-0 border-r-2 border-b-2 border-l border-[#808080] border-l-[#d0d0d0] bg-[#f0f0f0]" />
    <ScrollArrow label="오른쪽으로" d="M6 3l5 5-5 5z" />
    <div className="flex shrink-0 pl-0.5">
      <button type="button" aria-label="처음"><Icon crisp d="M5.5 4v8" fill="M11 4v8L7 8z" /></button>
      <button type="button" aria-label="일시정지"><Icon crisp fill="M5 4h2v8H5zM9 4h2v8H9z" /></button>
      <button type="button" aria-label="끝"><Icon crisp d="M10.5 4v8" fill="M5 4v8l4-4z" /></button>
    </div>
    <div className="relative ml-1.5 h-3.5 w-[61px] shrink-0">
      <input
        type="range"
        aria-label="재생 속도"
        min="0"
        max="20"
        defaultValue="1"
        className="absolute top-0.5 left-0 h-2 w-full appearance-none border-t border-[#444] bg-transparent [&::-webkit-slider-thumb]:h-2 [&::-webkit-slider-thumb]:w-[5px] [&::-webkit-slider-thumb]:appearance-none [&::-webkit-slider-thumb]:rounded-b-sm [&::-webkit-slider-thumb]:border [&::-webkit-slider-thumb]:border-black [&::-webkit-slider-thumb]:bg-white"
      />
      <svg viewBox="0 0 61 4" className="absolute bottom-0 left-0 h-1 w-full" shapeRendering="crispEdges" aria-hidden="true">
        {Array.from({ length: 21 }, (_, i) => (
          <rect key={i} x={i * 3} y={i % 5 === 0 ? 0 : 1} width="1" height="4" />
        ))}
      </svg>
    </div>
    <div className="flex shrink-0 pl-1">
      {BOTTOM_TOOLS.map((t) => (
        <button
          key={t.name}
          type="button"
          aria-label={t.name}
          className={t.boxed ? 'flex h-3.5 w-4 items-center justify-center bg-[#ececec] outline outline-[#c8c8c8]' : 'flex h-3.5 w-4 items-center justify-center'}
        >
          {t.icon}
        </button>
      ))}
    </div>
  </div>
);

const SideTools = () => (
  <nav className="flex w-7 shrink-0 flex-col self-start border border-[#c8c8c8] bg-[#fafafa] text-[#444]">
    {SIDE_TOOLS.map((t, i) => (
      <button
        key={t.name}
        type="button"
        aria-label={t.name}
        className={`flex h-[22px] flex-col items-center justify-center ${i === 1 ? 'border-b border-[#c8c8c8]' : ''} ${t.active ? 'mx-0.5 rounded-sm border border-[#b4b4b4] bg-[#ebebeb]' : ''}`}
      >
        {t.icon}
        {t.name === '자동추세선' && (
          <>
            <Icon size="h-2 w-4" d="M3 14L15 0" width={2} />
            <span className="text-[8px] leading-[8px] font-bold">AUTO</span>
          </>
        )}
        {t.name === '문자' && (
          <span className='flex font-["Liberation_Serif",serif] text-sm leading-4 font-bold'>
            T<Icon size="size-2" d="M8 1v14M1 8h14" width={2} />
          </span>
        )}
        {t.name === '모두 지우기' && (
          <>
            <span className="-ml-2 text-[8px] leading-[8px] font-bold">All</span>
            <Icon size="h-2.5 w-4" d="M2 8l5-6h10l-5 6zM2 8v6h10l5-6V2M12 8v6" width={2} />
          </>
        )}
      </button>
    ))}
  </nav>
);

export default function App() {
  return (
    <div className="h-screen min-h-[600px] overflow-hidden bg-[#b4b5ba] pr-0.5">
      <div className={`flex h-full flex-col border-t border-r border-b-2 border-l-2 border-[#666] bg-[#dddcd6] text-black ${MONO}`}>
        <Titlebar />
        <Toolbar />
        <div className="flex min-h-0 flex-1 gap-1.5 px-1.5 pb-[5px]">
          <Sidebar />
          <main className="flex min-w-0 flex-1 flex-col border border-[#c0c0c0] bg-white">
            <QuoteBar />
            <Chart />
            <BottomBar />
          </main>
          <SideTools />
        </div>
      </div>
    </div>
  );
}
